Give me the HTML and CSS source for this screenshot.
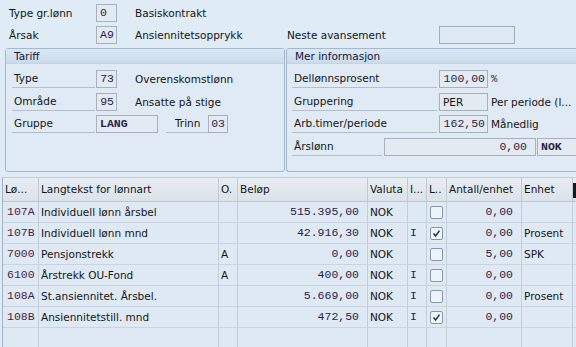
FILE: index.html
```html
<!DOCTYPE html>
<html>
<head>
<meta charset="utf-8">
<link rel="stylesheet" href="styles.css">
</head>
<body>
<div class="screen">
  <div class="top">
    <div class="row">
      <span class="tlbl">Type gr.lønn</span>
      <span class="fld mono w21">0</span>
      <span class="txt ttxt">Basiskontrakt</span>
    </div>
    <div class="row">
      <span class="tlbl">Årsak</span>
      <span class="fld mono w21">A9</span>
      <span class="txt ttxt wide">Ansiennitetsopprykk</span>
      <span class="tlbl neste">Neste avansement</span>
      <span class="fld input w76"></span>
    </div>
  </div>

  <div class="groups">
    <section class="group tariff">
      <div class="ghead">Tariff</div>
      <div class="gbody">
        <div class="row">
          <span class="lbl l83">Type</span>
          <span class="fld mono w21 right">73</span>
          <span class="txt">Overenskomstlønn</span>
        </div>
        <div class="row">
          <span class="lbl l83">Område</span>
          <span class="fld mono w21 right">95</span>
          <span class="txt">Ansatte på stige</span>
        </div>
        <div class="row">
          <span class="lbl l83">Gruppe</span>
          <span class="fld mono bold w62">LANG</span>
          <span class="lbl trinn">Trinn</span>
          <span class="fld mono w20 right">03</span>
        </div>
      </div>
    </section>
    <section class="group mer">
      <div class="ghead">Mer informasjon</div>
      <div class="gbody">
        <div class="row">
          <span class="lbl l145">Dellønnsprosent</span>
          <span class="fld mono w49 right">100,00</span>
          <span class="txt after mono small">%</span>
        </div>
        <div class="row">
          <span class="lbl l145">Gruppering</span>
          <span class="fld w49">PER</span>
          <span class="txt after">Per periode (l...</span>
        </div>
        <div class="row">
          <span class="lbl l145">Arb.timer/periode</span>
          <span class="fld mono w49 right">162,50</span>
          <span class="txt after">Månedlig</span>
        </div>
        <div class="row">
          <span class="lbl l90">Årslønn</span>
          <span class="fld mono w152 right pad8">0,00</span>
          <span class="fld mono bold w44 nok">NOK</span>
        </div>
      </div>
    </section>
  </div>

  <div class="tbl">
    <div class="c h">Lø...</div>
    <div class="c h">Langtekst for lønnart</div>
    <div class="c h">O.</div>
    <div class="c h">Beløp</div>
    <div class="c h">Valuta</div>
    <div class="c h">I...</div>
    <div class="c h">L..</div>
    <div class="c h">Antall/enhet</div>
    <div class="c h">Enhet</div>
    <div class="c h last"><span class="edge"></span></div>

    <div class="c mono key">107A</div>
    <div class="c">Individuell lønn årsbel</div>
    <div class="c"></div>
    <div class="c mono num">515.395,00</div>
    <div class="c">NOK</div>
    <div class="c mono"></div>
    <div class="c cb"><svg width="13" height="13" viewBox="0 0 13 13"><rect x="0.5" y="0.5" width="12" height="12" rx="1.5" class="box"/></svg></div>
    <div class="c mono num">0,00</div>
    <div class="c"></div>
    <div class="c last"></div>

    <div class="c mono key">107B</div>
    <div class="c">Individuell lønn mnd</div>
    <div class="c"></div>
    <div class="c mono num">42.916,30</div>
    <div class="c">NOK</div>
    <div class="c mono">I</div>
    <div class="c cb"><svg width="13" height="13" viewBox="0 0 13 13"><rect x="0.5" y="0.5" width="12" height="12" rx="1.5" class="box"/><path d="M3.5 6.5 L5.6 9 L9.5 3.6" class="tick"/></svg></div>
    <div class="c mono num">0,00</div>
    <div class="c">Prosent</div>
    <div class="c last"></div>

    <div class="c mono key">7000</div>
    <div class="c">Pensjonstrekk</div>
    <div class="c">A</div>
    <div class="c mono num">0,00</div>
    <div class="c">NOK</div>
    <div class="c mono"></div>
    <div class="c cb"><svg width="13" height="13" viewBox="0 0 13 13"><rect x="0.5" y="0.5" width="12" height="12" rx="1.5" class="box"/></svg></div>
    <div class="c mono num">5,00</div>
    <div class="c">SPK</div>
    <div class="c last"></div>

    <div class="c mono key">6100</div>
    <div class="c">Årstrekk OU-Fond</div>
    <div class="c">A</div>
    <div class="c mono num">400,00</div>
    <div class="c">NOK</div>
    <div class="c mono">I</div>
    <div class="c cb"><svg width="13" height="13" viewBox="0 0 13 13"><rect x="0.5" y="0.5" width="12" height="12" rx="1.5" class="box"/></svg></div>
    <div class="c mono num">0,00</div>
    <div class="c"></div>
    <div class="c last"></div>

    <div class="c mono key">108A</div>
    <div class="c">St.ansiennitet. Årsbel.</div>
    <div class="c"></div>
    <div class="c mono num">5.669,00</div>
    <div class="c">NOK</div>
    <div class="c mono">I</div>
    <div class="c cb"><svg width="13" height="13" viewBox="0 0 13 13"><rect x="0.5" y="0.5" width="12" height="12" rx="1.5" class="box"/></svg></div>
    <div class="c mono num">0,00</div>
    <div class="c">Prosent</div>
    <div class="c last"></div>

    <div class="c mono key">108B</div>
    <div class="c">Ansiennitetstill. mnd</div>
    <div class="c"></div>
    <div class="c mono num">472,50</div>
    <div class="c">NOK</div>
    <div class="c mono">I</div>
    <div class="c cb"><svg width="13" height="13" viewBox="0 0 13 13"><rect x="0.5" y="0.5" width="12" height="12" rx="1.5" class="box"/><path d="M3.5 6.5 L5.6 9 L9.5 3.6" class="tick"/></svg></div>
    <div class="c mono num">0,00</div>
    <div class="c"></div>
    <div class="c last"></div>

    <div class="c"></div>
    <div class="c"></div>
    <div class="c"></div>
    <div class="c"></div>
    <div class="c"></div>
    <div class="c"></div>
    <div class="c"></div>
    <div class="c"></div>
    <div class="c"></div>
    <div class="c last"></div>
  </div>
</div>
</body>
</html>
```
FILE: styles.css
```css
html, body {
  margin: 0;
  padding: 0;
  overflow: hidden;
}
body {
  width: 576px;
  height: 347px;
  background: #dfebf5;
  font-family: "DejaVu Sans", "Noto Sans", sans-serif;
  font-size: 10.5px;
  color: #141414;
}
.screen {
  width: 576px;
  height: 347px;
  overflow: hidden;
}
.row {
  display: flex;
  align-items: stretch;
  height: 18px;
  white-space: nowrap;
}
.mono {
  font-family: "Liberation Mono", "DejaVu Sans Mono", monospace;
  font-size: 11.5px;
  color: #2a2248;
}
.bold { font-weight: bold; }
.small { font-size: 10.5px; }

/* top area */
.top {
  padding: 4px 0 0 9px;
  display: flex;
  flex-direction: column;
  gap: 4px;
}
.tlbl {
  width: 87px;
  line-height: 18px;
  flex: none;
}
.tlbl.neste { width: 152px; }
.ttxt { margin-left: 18px; }
.ttxt.wide { width: 152px; }

/* fields */
.fld {
  box-sizing: border-box;
  height: 18px;
  line-height: 16px;
  border: 1px solid #a7b1bc;
  background: #e3eaf1;
  padding: 0 3px;
  flex: none;
  overflow: hidden;
}
.fld.input { background: #dfe9f4; border-color: #a3aebb; }
.fld.right { text-align: right; padding: 0 2px; }
.fld.pad8 { padding-right: 8px; }
.w20 { width: 20px; }
.w21 { width: 21px; }
.w49 { width: 49px; }
.w62 { width: 62px; }
.w76 { width: 76px; }
.w152 { width: 152px; }
.w44 { width: 44px; margin-left: 1px; }
.txt {
  line-height: 18px;
  flex: none;
}

/* groups */
.groups {
  display: flex;
  margin-top: 4px;
  padding-left: 5px;
  gap: 1px;
}
.group {
  box-sizing: border-box;
  height: 124px;
  border: 1px solid #a3b8cf;
  border-radius: 3px;
  background: #dfeaf5;
  flex: none;
}
.tariff { width: 280px; }
.mer { width: 296px; border-right-color: transparent; }
.ghead {
  height: 14px;
  line-height: 14px;
  padding-left: 8px;
  background: linear-gradient(#dce8f4, #cbdbeb);
  border-bottom: 1px solid #c3d3e3;
  color: #16163a;
}
.gbody {
  display: flex;
  flex-direction: column;
  gap: 4.5px;
  padding-top: 6px;
}
.tariff .gbody { padding-left: 6px; }
.mer .gbody { padding-left: 5px; }
.lbl {
  box-sizing: border-box;
  height: 18px;
  line-height: 17px;
  padding-left: 2px;
  border-bottom: 1px solid #b3bfcc;
  flex: none;
}
.l83 { width: 83px; margin-right: 1px; }
.l145 { width: 145px; margin-right: 2px; }
.l90 { width: 90px; margin-right: 2px; }
.tariff .txt { margin-left: 18px; }
.mer .txt.after { margin-left: 3px; }
.trinn { width: 42px; margin-left: 8px; padding-left: 9px; }

/* table */
.tbl {
  margin-top: 5px;
  margin-left: 2px;
  height: 169px;
  overflow: hidden;
  border-left: 1px solid #a4b3c4;
  border-top: 1px solid #c2ccd6;
  display: grid;
  grid-template-columns: 36px 180px 19px 130px 40px 19px 20px 75px 51px 1fr;
  grid-auto-rows: 21px;
}
.c {
  box-sizing: border-box;
  border-right: 1px solid #c3cfdc;
  border-bottom: 1px solid #c8d4e1;
  padding: 0 2px;
  line-height: 20px;
  white-space: nowrap;
  overflow: hidden;
  background: #dee9f4;
}
.c.h {
  height: 24px;
  line-height: 23px;
  background: linear-gradient(#e8edf2, #dbe2e9);
  border-right-color: #c1c9d2;
  border-bottom-color: #bcc6d0;
  color: #141414;
}
.tbl > .c:nth-child(-n+10) { height: 24px; }
.tbl { grid-template-rows: 24px; }
.c.last { border-right: none; }
.c.h.last { position: relative; }
.edge {
  display: block;
  width: 3px;
  height: 15px;
  margin-top: 5px;
  margin-left: -2px;
  background: #1a1a1a;
}
.c.key { padding-left: 4px; color: #4a1f3e; }
.c.num { text-align: right; padding-right: 8px; }
.c.cb {
  display: flex;
  align-items: center;
  padding-left: 3px;
}
.cb svg { display: block; }
.box { fill: #eef3f8; stroke: #8896a6; stroke-width: 1; }
.tick { fill: none; stroke: #2c3440; stroke-width: 1.5; }
```
